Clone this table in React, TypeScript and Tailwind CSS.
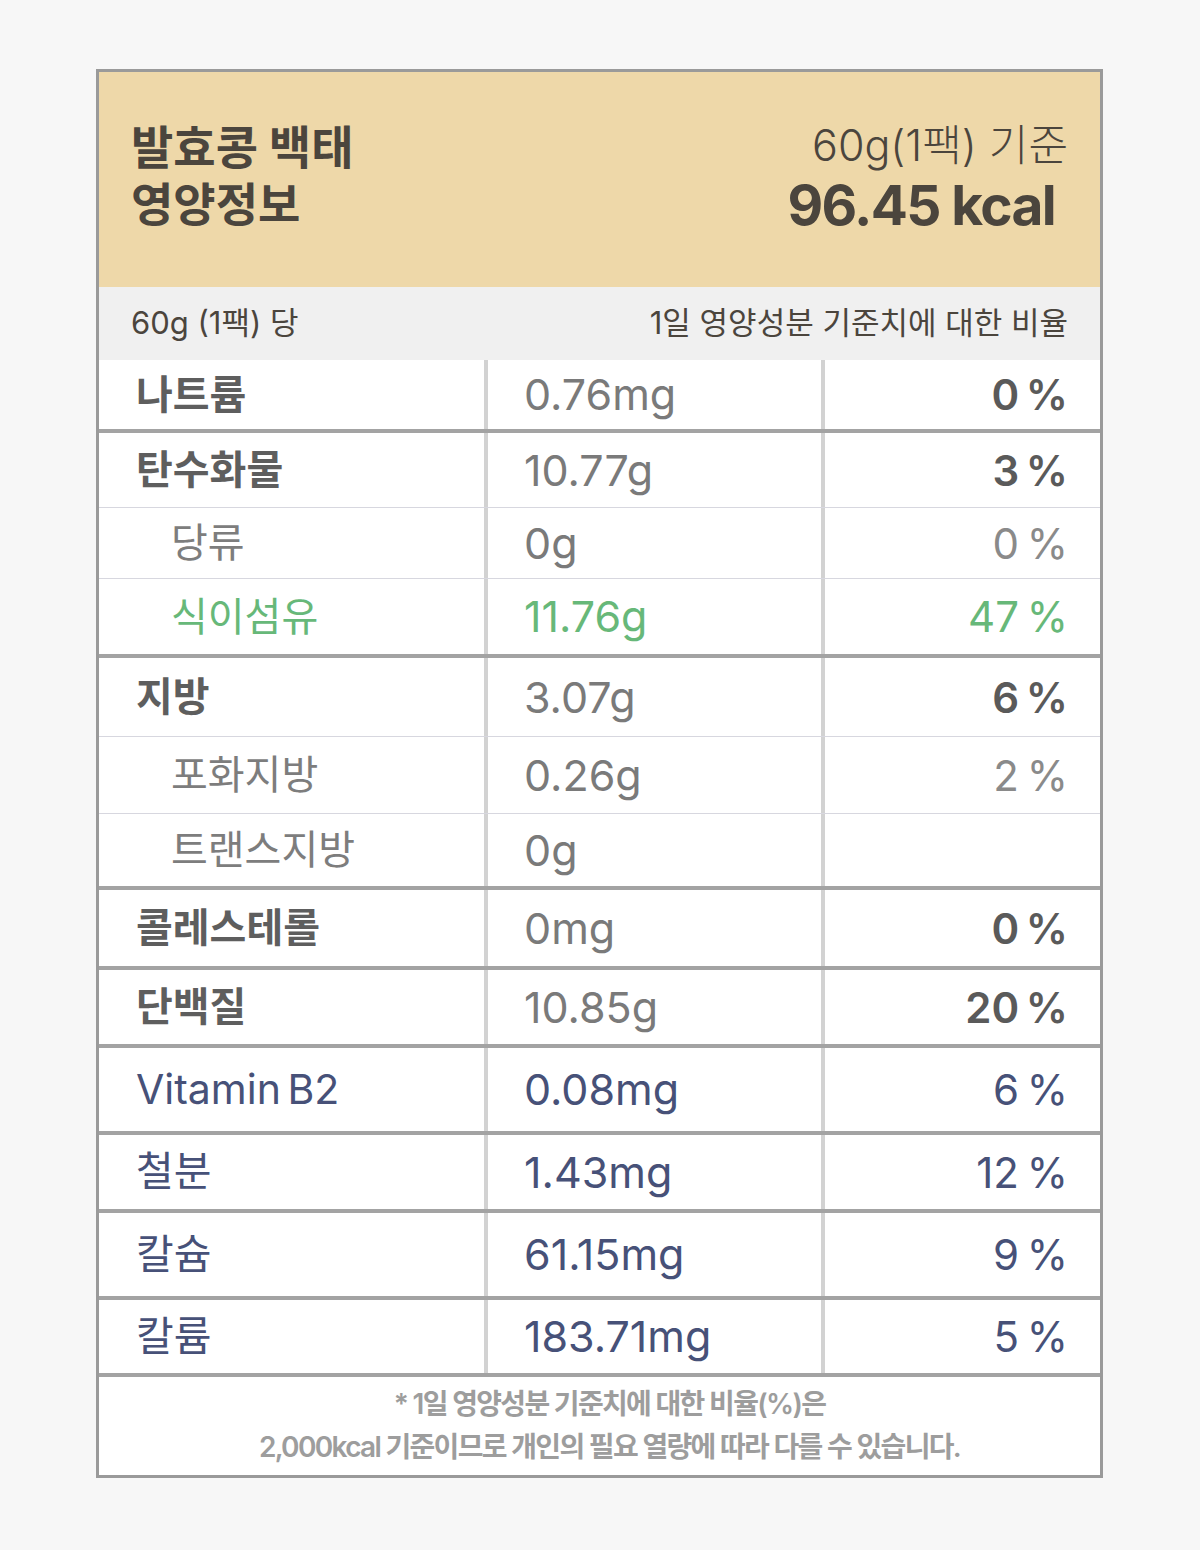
const rows = [
  { label: "나트륨", value: "0.76mg", pct: "0 %", kind: "main", h: "h-[73px]", line: "thick" },
  { label: "탄수화물", value: "10.77g", pct: "3 %", kind: "main", h: "h-[75px]", line: "thin" },
  { label: "당류", value: "0g", pct: "0 %", kind: "sub", h: "h-[71px]", line: "thin" },
  { label: "식이섬유", value: "11.76g", pct: "47 %", kind: "green", h: "h-[79px]", line: "thick" },
  { label: "지방", value: "3.07g", pct: "6 %", kind: "main", h: "h-[79px]", line: "thin" },
  { label: "포화지방", value: "0.26g", pct: "2 %", kind: "sub", h: "h-[77px]", line: "thin" },
  { label: "트랜스지방", value: "0g", pct: "", kind: "sub", h: "h-[76px]", line: "thick" },
  { label: "콜레스테롤", value: "0mg", pct: "0 %", kind: "main", h: "h-[80px]", line: "thick" },
  { label: "단백질", value: "10.85g", pct: "20 %", kind: "main", h: "h-[78px]", line: "thick" },
  { label: "Vitamin B2", value: "0.08mg", pct: "6 %", kind: "navy", h: "h-[87px]", line: "thick" },
  { label: "철분", value: "1.43mg", pct: "12 %", kind: "navy", h: "h-[78px]", line: "thick" },
  { label: "칼슘", value: "61.15mg", pct: "9 %", kind: "navy", h: "h-[87px]", line: "thick" },
  { label: "칼륨", value: "183.71mg", pct: "5 %", kind: "navy", h: "h-[77px]", line: "thick" },
]

const labelStyle: Record<string, string> = {
  main: "pl-[37px] text-[40px] font-bold text-[#5e5e5e]",
  sub: "pl-[72px] text-[40px] font-normal text-[#7d7d7d]",
  green: "pl-[72px] text-[40px] font-normal text-[#67b879]",
  navy: "pl-[37px] text-[41px] font-normal text-[#475178] [word-spacing:-5px]",
}

const valueStyle: Record<string, string> = {
  main: "text-[#7a7a7a]",
  sub: "text-[#7a7a7a]",
  green: "text-[#67b879]",
  navy: "text-[#475178]",
}

const pctStyle: Record<string, string> = {
  main: "font-semibold text-[#5a5a5a]",
  sub: "font-normal text-[#8a8a8a]",
  green: "font-normal text-[#67b879]",
  navy: "font-normal text-[#475178]",
}

export default function App() {
  return (
    <div className="min-h-[1550px] w-[1200px] bg-[#f7f7f7] pt-[69px] font-['Inter','Noto_Sans_CJK_KR',sans-serif]">
      <div className="ml-[96px] w-[1007px] border-[3px] border-[#9a9a9a] bg-white">
        {/* header */}
        <div className="flex h-[215px] items-start justify-between bg-[#eed8a9] px-[32px] pt-[47px] text-[#4b453d]">
          <div className="text-[46px] font-bold leading-[57px]">
            <div>발효콩 백태</div>
            <div>영양정보</div>
          </div>
          <div className="flex flex-col items-end">
            <div className="text-[43px] font-light leading-[52px]">60g(1팩) 기준</div>
            <div className="mr-[13px] mt-[2px] text-[55px] font-bold leading-[64px] tracking-[-0.03em]">96.45 kcal</div>
          </div>
        </div>

        {/* sub header */}
        <div className="flex h-[73px] items-center justify-between bg-[#f0f0f0] px-[32px] text-[31px] text-[#4b453d]">
          <span>60g (1팩) 당</span>
          <span>1일 영양성분 기준치에 대한 비율</span>
        </div>

        {rows.map((r, i) => (
          <div
            key={i}
            className={`flex ${r.h} ${r.line === "thick" ? "border-b-4 border-[#a3a3a3]" : "border-b border-[#d7d7df]"}`}
          >
            <div className={`flex w-[389px] items-center border-r-4 border-[#d2d2d2] ${labelStyle[r.kind]}`}>
              {r.label}
            </div>
            <div className={`flex w-[337px] items-center border-r-4 border-[#d2d2d2] pl-[36px] text-[43px] font-normal ${valueStyle[r.kind]}`}>
              {r.value}
            </div>
            <div className={`flex flex-1 items-center justify-end pr-[32px] text-[42px] [word-spacing:-4px] ${pctStyle[r.kind]}`}>
              {r.pct}
            </div>
          </div>
        ))}

        {/* footnote */}
        <div className="flex h-[98px] flex-col items-center justify-center pl-[20px] text-[28px] font-semibold leading-[43px] tracking-[-0.06em] text-[#9d9d9d]">
          <div>* 1일 영양성분 기준치에 대한 비율(%)은</div>
          <div>2,000kcal 기준이므로 개인의 필요 열량에 따라 다를 수 있습니다.</div>
        </div>
      </div>
    </div>
  )
}
